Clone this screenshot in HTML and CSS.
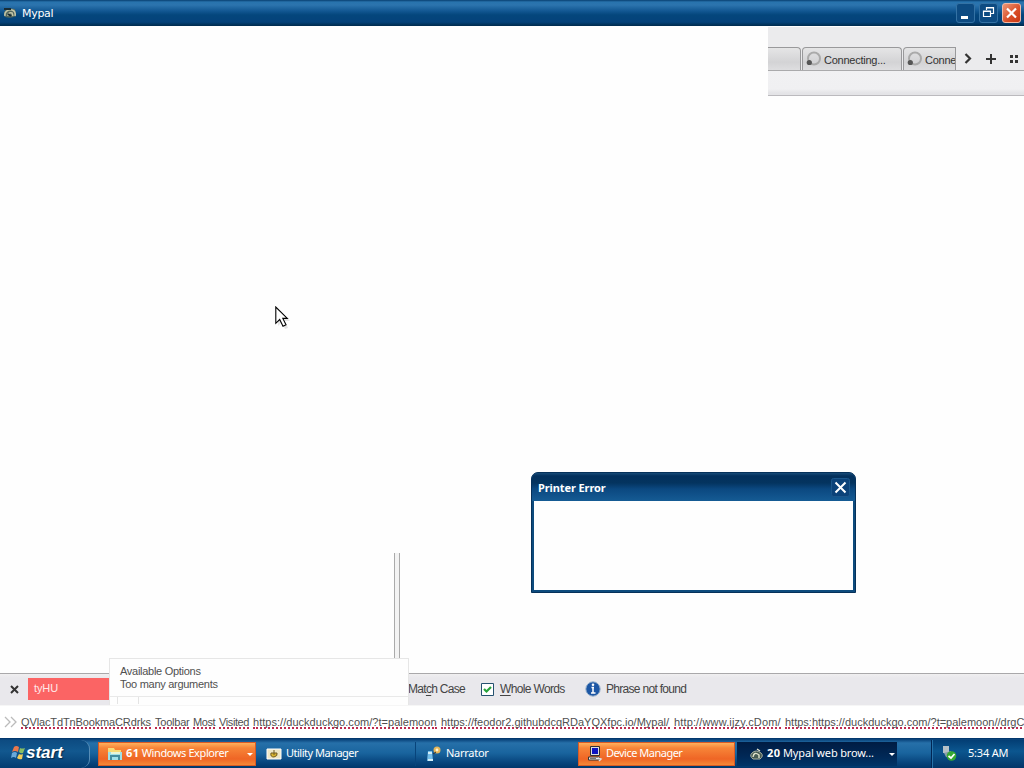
FILE: index.html
```html
<!DOCTYPE html>
<html lang="en">
<head>
<meta charset="utf-8">
<title>Mypal</title>
<link rel="stylesheet" href="styles.css">
</head>
<body>
<header class="titlebar">
  <svg class="app-icon" width="14" height="12" viewBox="0 0 14 12"><path d="M1 5Q5 0 12 2L13 9Q8 12 2 10Z" fill="#53675d"/><path d="M2 9C1 5 5 2 9 3Q13 4 12 9M5 9Q5 5 9 6L10 9" fill="none" stroke="#c3c6a8" stroke-width="1.5"/><path d="M1 2H8M5 7L8 9" stroke="#182c35" stroke-width="2"/></svg>
  <span class="app-title">Mypal</span>
  <div class="window-buttons">
    <span class="window-button"><svg width="18" height="18"><path d="M4 13.5H11" stroke="#fff" stroke-width="3"/></svg></span>
    <span class="window-button"><svg width="18" height="18"><path d="M6.5 6V3.5H13.5V9.5H11M6.5 4H13.5M3.5 7H10.5V12.5H3.5ZM3.5 7.5H10.5" fill="none" stroke="#fff" stroke-width="1.2"/></svg></span>
    <span class="window-button close"><svg width="18" height="18"><path d="M4 4.5L13 13.5M13 4.5L4 13.5" stroke="#fff" stroke-width="2.2"/></svg></span>
  </div>
</header>
<main class="content">
  <section class="browser-chrome">
    <div class="tabs">
      <div class="tab first-tab"></div>
      <div class="tab"><svg class="spinner" width="15" height="16"><circle cx="8" cy="7.5" r="6" fill="none" stroke="#aaa" stroke-width="2"/><circle cx="3.3" cy="11.5" r="2.6" fill="#555"/></svg><span class="tab-label">Connecting...</span></div>
      <div class="tab cut-tab"><svg class="spinner" width="15" height="16"><circle cx="8" cy="7.5" r="6" fill="none" stroke="#aaa" stroke-width="2"/><circle cx="3.3" cy="11.5" r="2.6" fill="#555"/></svg><span class="tab-label">Conne</span></div>
      <svg class="tab-tools" width="67" height="24"><path d="M8.5 8L13 12.5L8.5 17" fill="none" stroke="#333" stroke-width="2.2"/><path d="M29 13H39M34 8V18" stroke="#333" stroke-width="2"/><path d="M53 9h3v3h-3zM58 9h3v3h-3zM53 14h3v3h-3zM58 14h3v3h-3z" fill="#333"/></svg>
    </div>
    <div class="toolbar"></div>
  </section>
</main>
<section class="findbar">
  <svg class="find-close" width="9" height="9"><path d="M1 1L8 8M8 1L1 8" stroke="#333" stroke-width="2"/></svg>
  <div class="find-input">tyHU</div>
  <span class="find-text match-case">Mat<u>c</u>h Case</span>
  <svg class="checkbox" width="13" height="13"><path d="M.5.5H12.5V12.5H.5Z" fill="#fff" stroke="#24516f"/><path d="M3 6L5.5 8.5L10 4" fill="none" stroke="#27a33b" stroke-width="2.2"/></svg>
  <span class="find-text whole-words"><u>W</u>hole Words</span>
  <svg class="info" width="16" height="16"><circle cx="8" cy="8" r="7.2" fill="#1d57a5" stroke="#9bb3cd"/><path d="M6.5 6.5H9M8 6V12M6 12H10.5" fill="none" stroke="#fff" stroke-width="1.5"/><circle cx="8" cy="3.8" r="1.3" fill="#fff"/></svg>
  <span class="find-text phrase">Phrase not found</span>
</section>
<section class="bookmarks">
  <svg class="chevrons" width="13" height="12"><path d="M1 1L6 6L1 11M7 1L12 6L7 11" fill="none" stroke="#bbb" stroke-width="1.3"/></svg>
  <span class="link link-a">QVlacTdTnBookmaCRdrks</span>
  <span class="link link-b">Toolbar</span>
  <span class="link link-c">Most</span>
  <span class="link link-d">Visited</span>
  <span class="link link-e">https://duckduckgo.com/?t=palemoon</span>
  <span class="link link-f">https://feodor2.githubdcqRDaYQXfpc.io/Mypal/</span>
  <span class="link link-g">http://www.ijzy.cDom/</span>
  <span class="link link-h">https:https://duckduckgo.com/?t=palemoon//drgC</span>
</section>
<footer class="taskbar">
  <div class="start"><svg width="14" height="17" viewBox="0 0 14 17"><path d="M3 3Q5 1 8 3L7 8Q4 6 1 8Z" fill="#eb784c"/><path d="M9 4Q11 5 14 4L12 9Q10 10 8 8Z" fill="#8abf63"/><path d="M1 9Q4 7 6 9L5 14Q3 12 0 14Z" fill="#69a9d9"/><path d="M8 10Q10 11 12 10L11 15Q8 16 6 14Z" fill="#f3ce57"/></svg><span class="start-label">start</span></div>
  <div class="task alert explorer"><svg class="task-icon" width="16" height="16"><path d="M1 2H7L8 4H14V14H1Z" fill="#f7db76"/><path d="M1 6H15V14H1Z" fill="#9fe0e7"/><path d="M4 14V10H12V14" fill="none" stroke="#438d9f" stroke-width="2"/><path d="M4 7H13" stroke="#e8f5d4" stroke-width="2"/></svg><span class="task-label"><b>61</b> Windows Explorer</span><i class="drop"></i></div>
  <div class="task utility"><svg class="task-icon" width="16" height="16"><path d="M1 3H15V13H1Z" fill="#eee7c5" stroke="#fff"/><path d="M8 4V9M5 7Q4 11 8 11Q12 10 11 7Z" fill="#d8b52e" stroke="#705c24"/></svg><span class="task-label">Utility Manager</span></div>
  <div class="task narrator"><svg class="task-icon" width="16" height="16"><path d="M2 5H6L7 15H1Z" fill="#75bde7"/><path d="M2 7H6M2 14H7" stroke="#d4f0fa" stroke-width="2"/><circle cx="11" cy="4" r="3.5" fill="#e4b65a"/><circle cx="11" cy="4" r="1.4" fill="#fff4d1"/><path d="M7 8L10 6" stroke="#37312c"/></svg><span class="task-label">Narrator</span></div>
  <div class="task alert device"><svg class="task-icon" width="16" height="16"><path d="M3.5.5H12.5V9.5H3.5Z" fill="#ddd" stroke="#333"/><path d="M5 2H11V8H5Z" fill="#0b13c1"/><path d="M1.5 11H12.5V14H1.5Z" fill="#eee" stroke="#333"/><path d="M3 12.5H9" stroke="#777"/><path d="M11 12L14 13L12 15" fill="none" stroke="#ddd" stroke-width="1.5"/></svg><span class="task-label">Device Manager</span></div>
  <div class="task current"><svg class="task-icon" width="15" height="15"><path d="M3 6Q7 2 12 6Q15 9 11 12H4Q0 9 3 6Z" fill="#475b53" stroke="#a8b0a0"/><path d="M4 10Q5 4 10 8V11M8 2L11 4" fill="none" stroke="#e2e4cd" stroke-width="1.4"/></svg><span class="task-label"><b>20</b> Mypal web brow...</span><i class="drop"></i></div>
  <div class="tray"><svg width="16" height="17"><path d="M2 1H8V8H2Z" fill="#b5c1c8"/><path d="M3 8L5 12L10 13V6Z" fill="#8b9fac"/><circle cx="10.5" cy="11" r="4.8" fill="#35a932"/><path d="M7.5 11L10 13L13.5 9" fill="none" stroke="#fff" stroke-width="1.7"/></svg><time>5:34 AM</time></div>
</footer>
<div class="scroll-edge"></div>
<aside class="options"><div class="options-box"><span class="option-title">Available Options</span><span class="option-text">Too many arguments</span></div><div class="option-marks"></div></aside>
<section class="dialog"><div class="dialog-head"><span>Printer Error</span><svg width="19" height="19"><rect x=".5" y=".5" width="18" height="18" rx="2" fill="#0b4279" stroke="#1b568b"/><path d="M4.5 4.5L14.5 14.5M14.5 4.5L4.5 14.5" stroke="#fff" stroke-width="2"/></svg></div><div class="dialog-body"></div></section>
<svg class="cursor" width="17" height="24"><path d="M3 3L3 20L7 16L10 23L13 22L10 15H15Z" fill="#999" opacity=".25"/><path d="M.8 1V17.3L4.7 13.5L8 20.2L11 18.8L7.8 12.4H12.3Z" fill="#fff" stroke="#000" stroke-width="1.1"/></svg>
</body>
</html>
```
FILE: styles.css
```css
* { box-sizing: border-box; }
body { margin: 0; width: 1024px; height: 768px; display: flex; flex-direction: column; overflow: hidden; position: relative; background: #fefefe; font: 12px "Liberation Sans", Arial, sans-serif; color: #505050; white-space: nowrap; }
svg { flex: none; }
.titlebar { height: 26px; flex: none; display: flex; align-items: center; padding: 0 3px; color: #fff; background: linear-gradient(#083f70 0, #2873ad 2px, #2c74ae 5px, #125792 11px, #04467c 15px, #04427a 22px, #003157 25px, #002b50); }
.app-icon { margin-right: 5px; }
.app-title { font: 11px "DejaVu Sans", sans-serif; letter-spacing: -.3px; }
.window-buttons { display: flex; gap: 4px; margin-left: auto; }
.window-button { width: 19px; height: 20px; border: 1px solid #3472a4; border-radius: 3px; background: #0d4b82; }
.window-button.close { border-color: #f1b9a6; background: linear-gradient(135deg, #ed9676, #d84d26 60%, #c93713); }
.content { flex: none; height: 647px; display: flex; justify-content: flex-end; align-items: flex-start; padding-top: 1px; }
.browser-chrome { width: 256px; height: 69px; background: #ebebed; }
.tabs { height: 44px; display: flex; align-items: flex-end; border-bottom: 1px solid #aaaaac; }
.tab { width: 100px; height: 23px; margin-right: 2px; padding-left: 3px; display: flex; align-items: center; border: 1px solid #99999b; border-bottom: 0; border-radius: 4px 4px 0 0; background: linear-gradient(#e5e5e6, #d3d3d5 65%, #dedee0); }
.first-tab { width: 33px; margin-right: 1px; border-left: 0; border-radius: 0 4px 0 0; }
.cut-tab { width: 53px; margin: 0 0 0 -1px; border-radius: 4px 0 0 0; overflow: hidden; }
.spinner { margin-right: 3px; }
.tab-label { font-size: 11px; letter-spacing: -.25px; padding-top: 2px; color: #333; }
.tab-tools { margin-left: 1px; }
.toolbar { height: 25px; border-bottom: 1px solid #bbbabe; background: linear-gradient(#f1f1f3, #f0f0f2 18px, #e4e4e7 22px); }
.findbar { height: 32px; flex: none; display: flex; align-items: center; padding: 0 0 1px 10px; border-top: 1px solid #a9a8aa; background: linear-gradient(#f0eff0, #e9e8ec 4px); }
.find-close { margin-right: 9px; }
.find-input { width: 81px; height: 22px; padding: 4px 6px; color: #ffe8e8; background: #fb6464; font-size: 11px; letter-spacing: -.1px; }
.find-text { font-size: 12px; letter-spacing: -.7px; color: #444; }
.find-text u { text-underline-offset: 2px; }
.match-case { width: 56px; margin-left: 299px; }
.checkbox { margin: 0 6px 0 17px; }
.whole-words { width: 65px; letter-spacing: -.65px; }
.info { margin: 0 5px 0 20px; }
.phrase { width: 84px; }
.bookmarks { height: 33px; flex: none; display: flex; align-items: center; gap: 4px; padding-left: 4px; border-top: 1px solid #f6f6f6; background: #fff; overflow: hidden; }
.link { height: 13px; flex: none; border-bottom: 2px dotted #bd2b50; font-size: 11px; line-height: 13px; margin-top: 1px; }
.link-a { width: 130px; letter-spacing: -.13px; }
.link-b { width: 34px; letter-spacing: -.22px; }
.link-c { width: 22px; letter-spacing: -.4px; }
.link-d { width: 30px; letter-spacing: -.4px; }
.link-e { width: 184px; letter-spacing: .03px; }
.link-f { width: 229px; }
.link-g { width: 107px; letter-spacing: .14px; }
.link-h { width: 245px; }
.taskbar { height: 30px; flex: none; display: flex; align-items: stretch; padding-top: 2px; color: #fff; background: linear-gradient(#003267 0, #0e4a82 2px, #2670a9 5px, #19649e 15px, #08467e 24px, #00366b); font: 11px "Noto Sans", "DejaVu Sans", sans-serif; }
.start { width: 90px; margin-right: 8px; padding: 0 0 3px 11px; display: flex; align-items: center; border-right: 1px solid #578db6; border-radius: 0 9px 9px 0; background: linear-gradient(#0d4b81, #12588f 40%, #033c70); font: italic bold 17px "Liberation Sans", Arial, sans-serif; text-shadow: 1px 1px 1px #062849; }
.start-label { margin-left: 1px; }
.task { height: 24px; margin-top: 2px; display: flex; align-items: center; position: relative; padding: 0 8px; }
.task-icon { margin-right: 3px; }
.task-label { letter-spacing: -.27px; padding-bottom: 3px; }
.task-label b { letter-spacing: .35px; }
.alert { border: 1px solid #d95b25; background: linear-gradient(#ffb05d, #f78538 5px, #ef6525 16px, #f48938); }
.explorer { width: 158px; }
.utility { width: 160px; padding-left: 10px; border-right: 1px solid #08447b; }
.utility .task-label { margin-left: 1px; }
.utility .task-label { letter-spacing: -.55px; }
.utility .task-label { letter-spacing: -.5px; }
.narrator { width: 162px; padding-left: 10px; }
.narrator .task-label { margin-left: 1px; }
.device { width: 157px; }
.device .task-label { letter-spacing: -.5px; }
.current { width: 160px; margin-left: 2px; padding-left: 12px; background: linear-gradient(#001c43, #002856 60%, #003467); }
.drop { margin-left: auto; border: 3px solid transparent; border-top-color: #fff; border-bottom: 0; }
.explorer .drop { margin-right: -6px; }
.current .drop { margin-right: -6px; }
.current .task-label { letter-spacing: -.15px; }
.explorer .task-label { letter-spacing: -.4px; }
.tray { width: 93px; margin-left: auto; padding: 0 0 1px 9px; display: flex; align-items: center; gap: 11px; border-left: 1px solid #002553; box-shadow: inset 1px 0 #2672a9; background: linear-gradient(#033e74, #0b568f 40%, #033568); }
.tray time { padding-bottom: 3px; letter-spacing: -.2px; }
.scroll-edge { position: absolute; left: 394px; top: 553px; width: 6px; height: 107px; border: 1px solid #aaa; border-width: 0 1px; background: #f3f3f3; }
.options { position: absolute; left: 109px; top: 658px; width: 300px; height: 47px; background: #fefefe; border: 1px solid #e6e6e6; border-bottom: 0; }
.options-box { height: 38px; padding: 6px 10px; display: flex; flex-direction: column; border-bottom: 1px solid #e9e9e9; line-height: 13px; font-size: 11px; letter-spacing: -.28px; }
.option-marks { width: 22px; height: 7px; margin-left: 7px; border: 1px solid #e4e4e4; border-width: 0 1px; }
.dialog { position: absolute; left: 531px; top: 472px; width: 325px; height: 121px; border-radius: 7px 7px 0 0; background: #0d4b7d; border: 1px solid #06315a; display: flex; flex-direction: column; padding: 0 2px 2px; overflow: hidden; }
.dialog-head { height: 28px; margin: 0 -2px; padding: 1px 5px 0 6px; display: flex; justify-content: space-between; align-items: center; background: linear-gradient(#174b78 0, #03305c 3px, #04345f 10px, #0b4880 16px, #155b94); color: #fff; font: bold 11px "Noto Sans", "DejaVu Sans", sans-serif; letter-spacing: -.1px; }
.dialog-body { flex: 1; background: #fefefe; }
.cursor { position: absolute; left: 275px; top: 306px; }
```
